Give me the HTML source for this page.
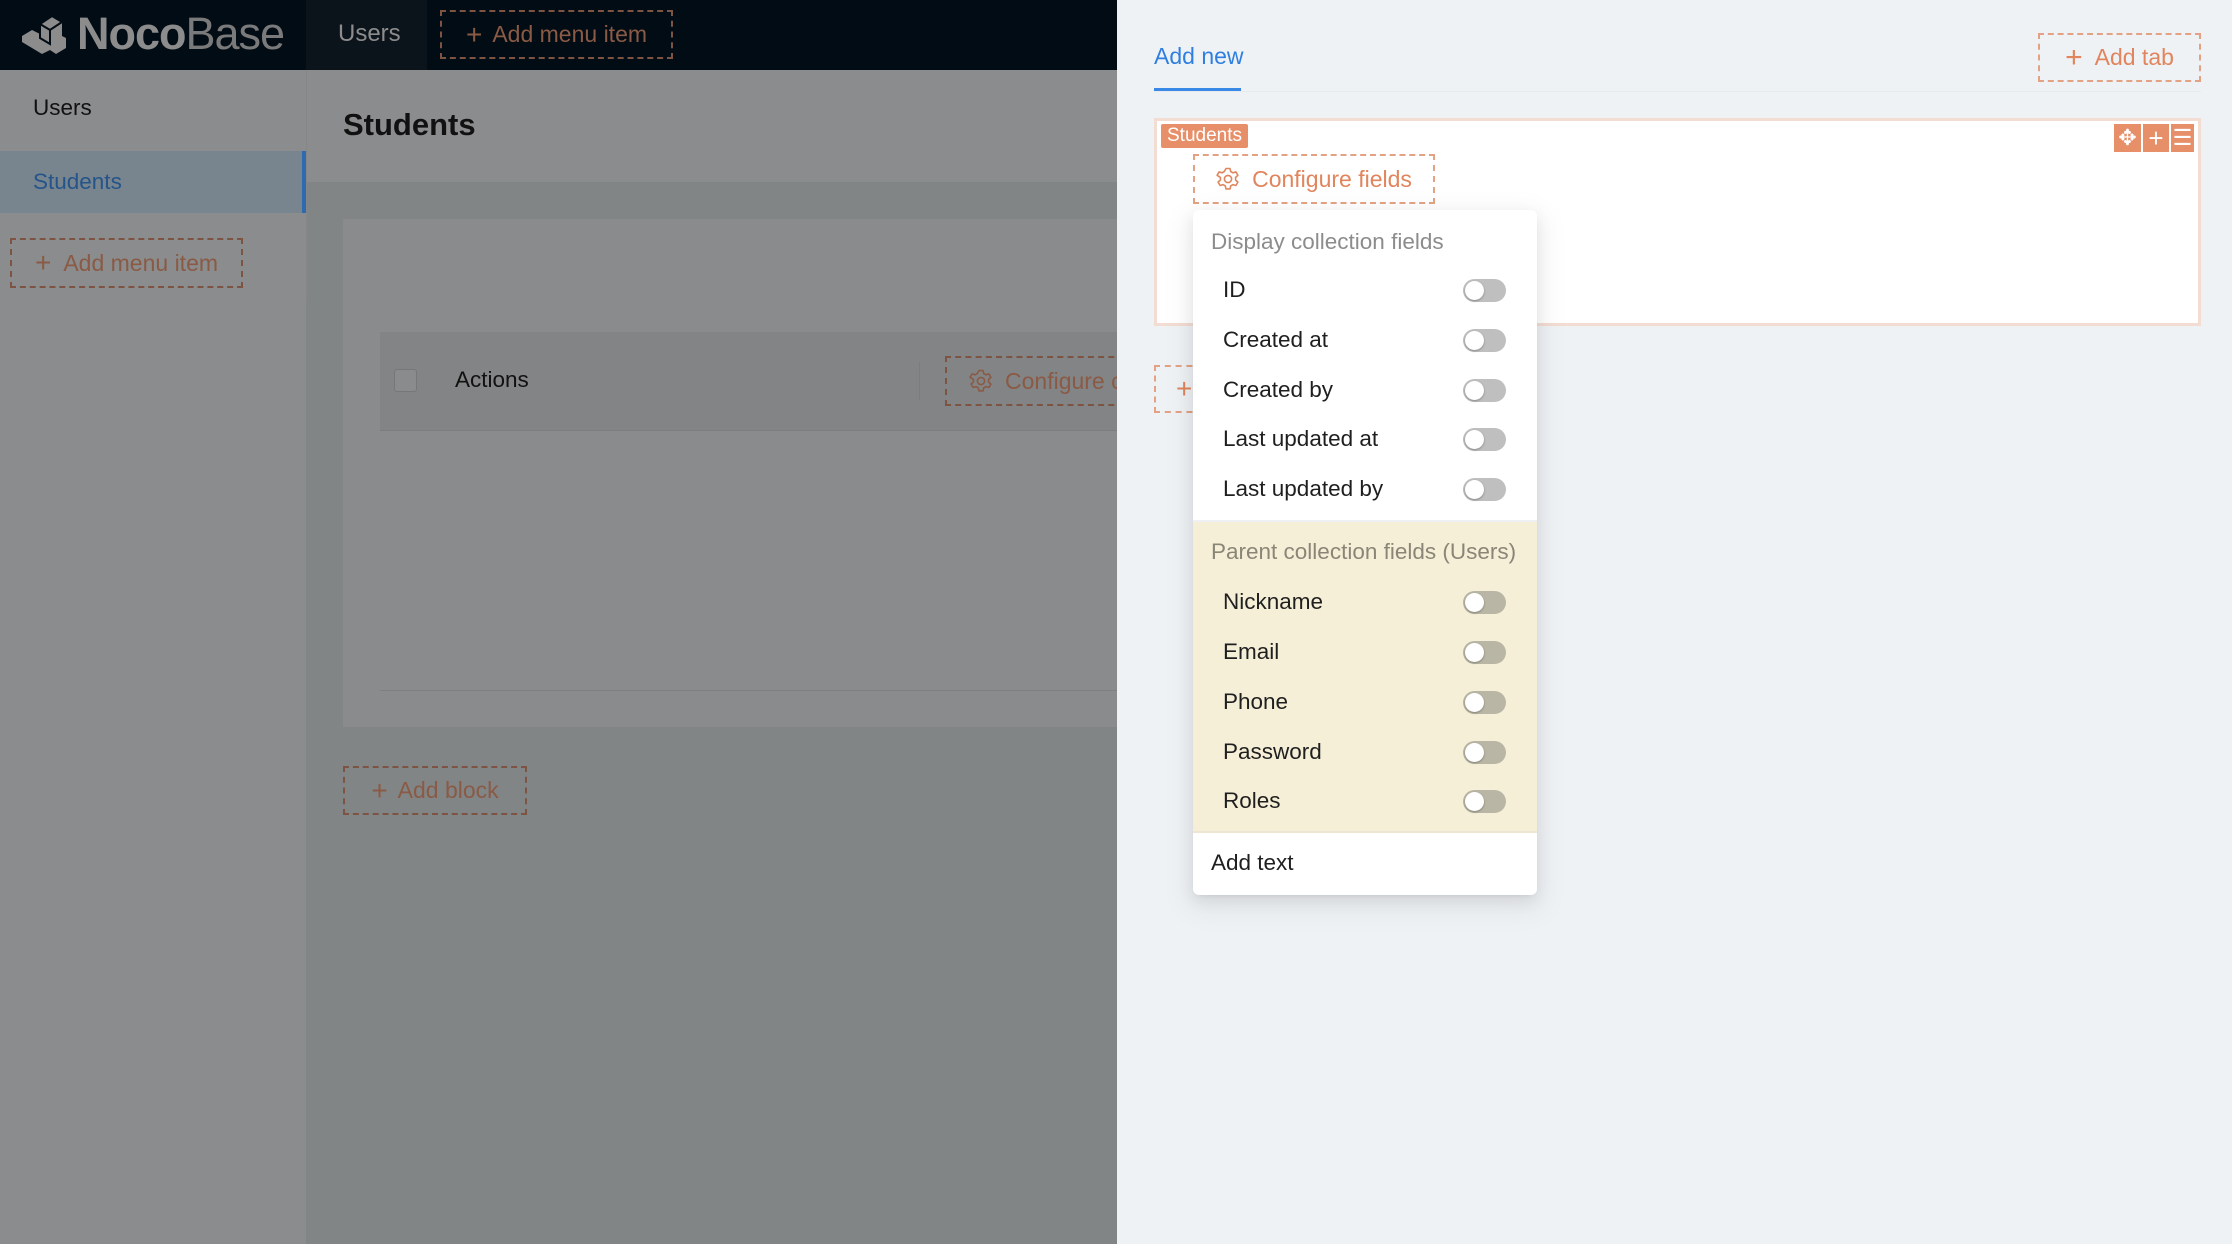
<!DOCTYPE html>
<html><head><meta charset="utf-8"><style>
*{box-sizing:border-box;margin:0;padding:0}
body{width:2232px;height:1244px;overflow:hidden;position:relative;font-family:"Liberation Sans",sans-serif;background:#818586}
.a{position:absolute}
.dash{border:2px dashed;display:flex;align-items:center;justify-content:center;white-space:nowrap}
.dl{border-color:#7d5341;color:#8a5a45}
.dr{border-color:#e3a283;color:#e0855d}
.tg{position:absolute;left:270px;width:43px;height:23px;border-radius:12px;background:#bfbfbf;top:50%;margin-top:-11px}
.tg:after{content:"";position:absolute;left:2px;top:2px;width:19px;height:19px;border-radius:50%;background:#fff;box-shadow:0 1px 2px rgba(0,0,0,.3)}
.p .tg{background:#b9b6a5}
.it{position:absolute;left:0;width:344px;height:50px;font-size:22.5px;color:#1f1f1f}
.it span{position:absolute;left:30px;top:50%;transform:translateY(-50%)}
.gear{margin-right:12px;flex-shrink:0}
</style></head><body>
<svg width="0" height="0" style="position:absolute"><defs><g id="g"><path d="M10 1.5h4l.7 3 2.2 1.3 3-.9 2 3.4-2.3 2.1v2.6l2.3 2.1-2 3.4-3-.9-2.2 1.3-.7 3h-4l-.7-3-2.2-1.3-3 .9-2-3.4 2.3-2.1v-2.6L1.1 8.3l2-3.4 3 .9L8.3 4.5z" fill="none" stroke="currentColor" stroke-width="1.6" stroke-linejoin="round"/><circle cx="12" cy="12" r="3.6" fill="none" stroke="currentColor" stroke-width="1.6"/></g></defs></svg>
<!-- header -->
<div class="a" style="left:0;top:0;width:1117px;height:70px;background:#020c15"></div>
<div class="a" style="left:306px;top:0;width:121px;height:70px;background:#0b131b"></div>
<svg class="a" style="left:20px;top:14px" width="48" height="42" viewBox="0 0 48 42"><path d="M2 22 L12 16 L20 20 L20 10 L32 2 L42 8 L42 22 L46 24 L46 34 L36 40 L30 36 L22 40 L12 34 L2 28Z" fill="#8c8c8c"/><path d="M20 10 L32 2 L42 8 L30 16Z M30 16 L30 30 L20 24 L20 10Z" fill="none" stroke="#020c15" stroke-width="2"/></svg>
<div class="a" style="left:77px;top:8px;font-size:45px;color:#8c8c8c;letter-spacing:-1px;line-height:52px"><b>Noco</b><span style="color:#7a7a7a">Base</span></div>
<div class="a" style="left:338px;top:20px;font-size:24px;color:#8c8c8c">Users</div>
<div class="a dash dl" style="left:440px;top:10px;width:233px;height:49px;font-size:23px"><span style="font-size:28px;margin-right:10px;font-weight:300">+</span>Add menu item</div>
<!-- sidebar -->
<div class="a" style="left:0;top:70px;width:306px;height:1174px;background:#8b8c8d"></div>
<div class="a" style="left:306px;top:70px;width:1px;height:230px;background:#858687"></div>
<div class="a" style="left:33px;top:95px;font-size:22.5px;color:#111">Users</div>
<div class="a" style="left:0;top:151px;width:306px;height:62px;background:#78858f;border-right:4px solid #2d6ab0"></div>
<div class="a" style="left:33px;top:169px;font-size:22.5px;color:#24548a">Students</div>
<div class="a dash dl" style="left:10px;top:238px;width:233px;height:50px;font-size:23px"><span style="font-size:28px;margin-right:12px;font-weight:300">+</span>Add menu item</div>
<!-- main -->
<div class="a" style="left:307px;top:70px;width:810px;height:112px;background:#8b8c8d"></div>
<div class="a" style="left:343px;top:107px;font-size:31px;font-weight:bold;color:#111">Students</div>
<div class="a" style="left:343px;top:219px;width:774px;height:508px;background:#8a8b8c"></div>
<div class="a" style="left:380px;top:332px;width:737px;height:99px;background:#838485;border-bottom:1px solid #7c7d7e"></div>
<div class="a" style="left:394px;top:369px;width:23px;height:23px;border:1px solid #777;border-radius:3px;background:#8a8b8c"></div>
<div class="a" style="left:455px;top:367px;font-size:22.5px;color:#111">Actions</div>
<div class="a" style="left:919px;top:362px;width:1px;height:38px;background:#7b7c7d"></div>
<div class="a dash dl" style="left:945px;top:356px;width:200px;height:50px;font-size:23px;justify-content:flex-start;padding-left:22px"><svg class="gear" width="24" height="24" viewBox="0 0 24 24"><use href="#g"/></svg>Configure columns</div>
<div class="a" style="left:380px;top:690px;width:737px;height:1px;background:#7e7f80"></div>
<div class="a dash dl" style="left:343px;top:766px;width:184px;height:49px;font-size:23px"><span style="font-size:28px;margin-right:10px;font-weight:300">+</span>Add block</div>
<!-- drawer -->
<div class="a" style="left:1117px;top:0;width:1115px;height:1244px;background:#eff2f5;overflow:hidden">
 <div class="a" style="left:37px;top:43px;font-size:23px;color:#2f7fe0">Add new</div>
 <div class="a" style="left:37px;top:88px;width:87px;height:3px;background:#3a88e6"></div>
 <div class="a" style="left:37px;top:91px;width:1047px;height:1px;background:#e7eaee"></div>
 <div class="a dash dr" style="left:921px;top:33px;width:163px;height:49px;font-size:23px"><span style="font-size:30px;margin-right:12px;font-weight:300">+</span>Add tab</div>
 <div class="a" style="left:37px;top:118px;width:1047px;height:208px;background:#fff;border:3px solid #f3ddd3"></div>
 <div class="a" style="left:44px;top:124px;width:87px;height:24px;background:#e68f68;color:#fff;font-size:19px;line-height:24px;text-align:center;border-radius:2px">Students</div>
 <div class="a" style="left:997px;top:124px;width:27px;height:28px;background:#e68f68;color:#fff;font-size:22px;text-align:center;line-height:28px">✥</div>
 <div class="a" style="left:1026px;top:124px;width:26px;height:28px;background:#e68f68;color:#fff;font-size:26px;text-align:center;line-height:28px">+</div>
 <div class="a" style="left:1054px;top:124px;width:23px;height:28px;background:#e68f68;color:#fff;font-size:22px;text-align:center;line-height:28px">☰</div>
 <div class="a dash dr" style="left:76px;top:154px;width:242px;height:50px;font-size:23px"><svg class="gear" width="24" height="24" viewBox="0 0 24 24"><use href="#g"/></svg>Configure fields</div>
 <div class="a" style="left:76px;top:238px;width:30px;height:48px;border-left:2px dashed #e3a283"></div>
 <div class="a dash dr" style="left:37px;top:365px;width:60px;height:48px;font-size:28px;justify-content:flex-start;padding-left:20px">+</div>
 <!-- dropdown -->
 <div class="a" style="left:76px;top:210px;width:344px;height:685px;background:#fff;border-radius:6px;box-shadow:0 6px 16px rgba(0,0,0,.08),0 3px 6px -4px rgba(0,0,0,.12),0 9px 28px 8px rgba(0,0,0,.05);overflow:hidden">
  <div class="a" style="left:18px;top:19px;font-size:22.5px;color:#8c8c8c">Display collection fields</div>
  <div class="it" style="top:55px"><span>ID</span><i class="tg"></i></div>
  <div class="it" style="top:105px"><span>Created at</span><i class="tg"></i></div>
  <div class="it" style="top:155px"><span>Created by</span><i class="tg"></i></div>
  <div class="it" style="top:204px"><span>Last updated at</span><i class="tg"></i></div>
  <div class="it" style="top:254px"><span>Last updated by</span><i class="tg"></i></div>
  <div class="a" style="left:0;top:310px;width:344px;height:2px;background:#eef0f4"></div>
  <div class="a p" style="left:0;top:312px;width:344px;height:311px;background:#f6efd8;border-bottom:2px solid #ece6d2">
   <div class="a" style="left:18px;top:17px;font-size:22.5px;color:#8a8677;white-space:nowrap">Parent collection fields (Users)</div>
   <div class="it" style="top:55px"><span>Nickname</span><i class="tg"></i></div>
   <div class="it" style="top:105px"><span>Email</span><i class="tg"></i></div>
   <div class="it" style="top:155px"><span>Phone</span><i class="tg"></i></div>
   <div class="it" style="top:205px"><span>Password</span><i class="tg"></i></div>
   <div class="it" style="top:254px"><span>Roles</span><i class="tg"></i></div>
  </div>
  <div class="a" style="left:18px;top:640px;font-size:22.5px;color:#1f1f1f">Add text</div>
 </div>
</div>
</body></html>
